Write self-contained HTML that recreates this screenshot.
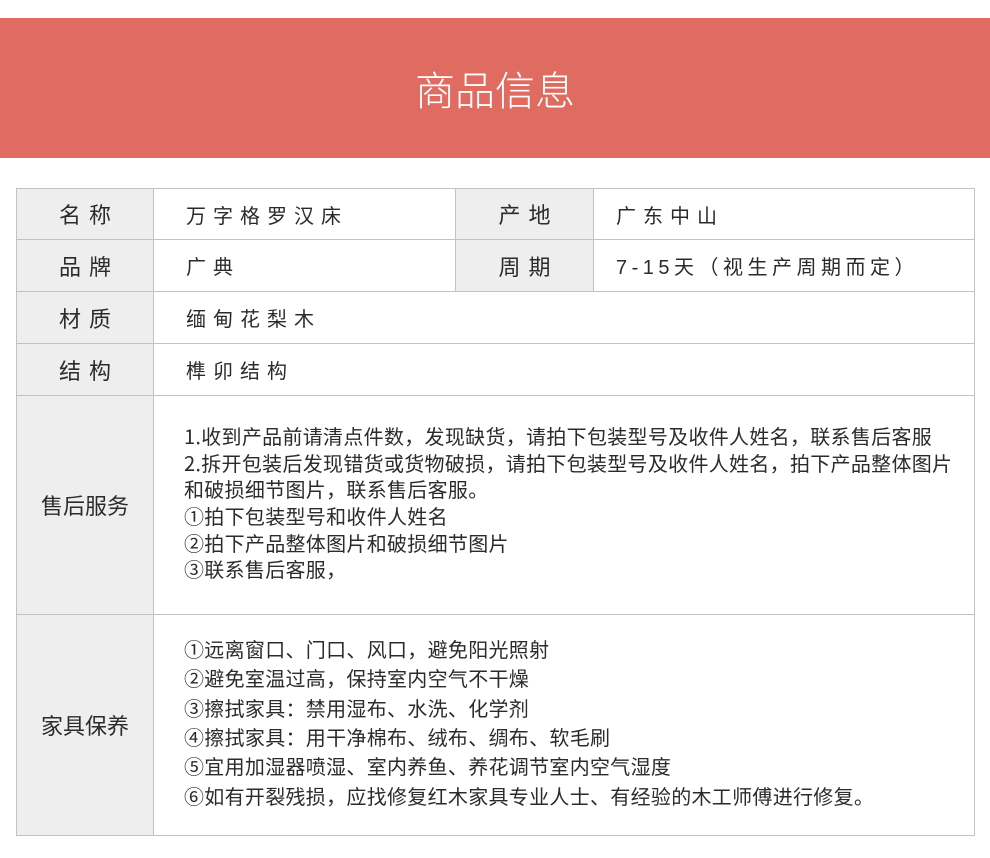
<!DOCTYPE html>
<html><head><meta charset="utf-8"><style>
*{margin:0;padding:0;box-sizing:border-box}
body{width:990px;height:858px;background:#fff;position:relative;overflow:hidden;font-family:"Liberation Sans","Noto Sans CJK SC",sans-serif;color:#2b2b2b}
.hdr{position:absolute;left:0;top:18px;width:990px;height:140px;background:#e06b60;color:#fff;font-size:40px;text-align:center;line-height:140px;font-family:"Noto Sans CJK SC",sans-serif;font-weight:300}
.c{position:absolute;border:1px solid #c2c2c2;display:flex;align-items:center;font-size:20px}
.l{background:#efeeef;justify-content:center;font-size:22px}
.sp{letter-spacing:8px;padding-left:8px}
.v{padding-left:32px;letter-spacing:7px}
.t{padding-left:30px;white-space:nowrap;letter-spacing:0.3px;font-size:20px;font-family:"Noto Sans CJK SC",sans-serif}
</style></head><body>
<div class="hdr">商品信息</div>

<div class="c l sp" style="left:16px;top:188px;width:138px;height:52px">名称</div>
<div class="c v" style="left:153px;top:188px;width:303px;height:52px">万字格罗汉床</div>
<div class="c l sp" style="left:455px;top:188px;width:139px;height:52px">产地</div>
<div class="c v" style="left:593px;top:188px;width:382px;height:52px;padding-left:22px">广东中山</div>

<div class="c l sp" style="left:16px;top:239px;width:138px;height:53px">品牌</div>
<div class="c v" style="left:153px;top:239px;width:303px;height:53px">广典</div>
<div class="c l sp" style="left:455px;top:239px;width:139px;height:53px">周期</div>
<div class="c v" style="left:593px;top:239px;width:382px;height:53px;padding-left:22px;letter-spacing:4.5px">7-15天（视生产周期而定）</div>

<div class="c l sp" style="left:16px;top:291px;width:138px;height:53px">材质</div>
<div class="c v" style="left:153px;top:291px;width:822px;height:53px">缅甸花梨木</div>

<div class="c l sp" style="left:16px;top:343px;width:138px;height:53px">结构</div>
<div class="c v" style="left:153px;top:343px;width:822px;height:53px">榫卯结构</div>

<div class="c l" style="left:16px;top:395px;width:138px;height:220px">售后服务</div>
<div class="c t" style="left:153px;top:395px;width:822px;height:220px;line-height:26.6px;padding-bottom:4px">1.收到产品前请清点件数，发现缺货，请拍下包装型号及收件人姓名，联系售后客服<br>2.拆开包装后发现错货或货物破损，请拍下包装型号及收件人姓名，拍下产品整体图片<br>和破损细节图片，联系售后客服。<br>①拍下包装型号和收件人姓名<br>②拍下产品整体图片和破损细节图片<br>③联系售后客服，</div>

<div class="c l" style="left:16px;top:614px;width:138px;height:222px">家具保养</div>
<div class="c t" style="left:153px;top:614px;width:822px;height:222px;line-height:29.4px;padding-bottom:6px">①远离窗口、门口、风口，避免阳光照射<br>②避免室温过高，保持室内空气不干燥<br>③擦拭家具：禁用湿布、水洗、化学剂<br>④擦拭家具：用干净棉布、绒布、绸布、软毛刷<br>⑤宜用加湿器喷湿、室内养鱼、养花调节室内空气湿度<br>⑥如有开裂残损，应找修复红木家具专业人士、有经验的木工师傅进行修复。</div>
</body></html>
